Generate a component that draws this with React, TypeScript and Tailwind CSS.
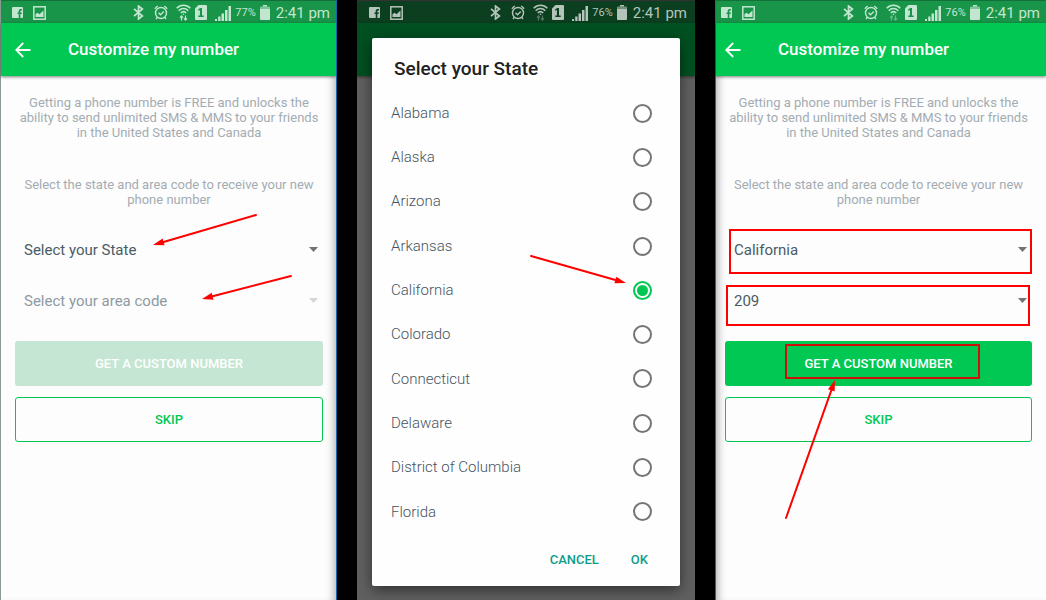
import { useState } from 'react'

const states = [
  'Alabama',
  'Alaska',
  'Arizona',
  'Arkansas',
  'California',
  'Colorado',
  'Connecticut',
  'Delaware',
  'District of Columbia',
  'Florida',
]

function FacebookIcon() {
  return (
    <svg width="11" height="11" viewBox="0 0 11 11" fill="currentColor" aria-hidden="true">
      <path d="M1 0h9a1 1 0 0 1 1 1v9a1 1 0 0 1-1 1H8.4V7h1.3l.2-1.6H8.4v-1c0-.5.2-.8.8-.8h.8V2.100H8.800C7.300 2.100 6.700 3 6.700 4.300v1.100H5.500V7h1.200v4H1a1 1 0 0 1-1-1V1a1 1 0 0 1 1-1z" />
    </svg>
  )
}

function PictureIcon() {
  return (
    <svg width="13" height="14" viewBox="0 0 13 14" aria-hidden="true">
      <rect x=".8" y=".8" width="11.400" height="12.400" fill="none" stroke="currentColor" strokeWidth="1.500" />
      <path d="M2.500 11V8.200l2-1.500 2 1.600 4-3.800V11z" fill="currentColor" />
    </svg>
  )
}

function BluetoothIcon() {
  return (
    <svg width="11" height="15" viewBox="0 0 11 15" fill="none" stroke="currentColor" strokeWidth="1.700" aria-hidden="true">
      <path d="M1 3.800l8.400 7.200-3.900 3V1l3.900 3L1 11.200" />
    </svg>
  )
}

function AlarmIcon() {
  return (
    <svg width="14" height="15" viewBox="0 0 14 15" fill="none" stroke="currentColor" strokeWidth="1.400" aria-hidden="true">
      <circle cx="7" cy="8" r="5.500" />
      <path d="M.8 3.700L3.700 1M13.200 3.700L10.300 1M4.500 7.800l2 1.900 3.300-3.200M3.200 12.400L2 14M10.800 12.400L12 14" />
    </svg>
  )
}

function WifiIcon({ idle = false }: { idle?: boolean }) {
  return (
    <svg width="15" height="17" viewBox="0 0 15 17" fill="none" stroke="currentColor" strokeWidth="1.500" aria-hidden="true">
      <path d="M.7 4.300C4.500.2 10.500.2 14.300 4.300M2.700 6.700c2.800-2.800 6.800-2.800 9.600 0M4.800 8.900c1.600-1.500 3.800-1.500 5.400 0" />
      <circle cx="7.500" cy="10.200" r=".8" fill="currentColor" stroke="none" />
      <path
        d="M5.500 16.500v-4.500M4 13.600l1.500-1.700L7 13.600M9.500 11.500V16M8 14.400l1.500 1.700 1.500-1.700"
        strokeWidth="1.200"
        opacity={idle ? 0.45 : 1}
      />
    </svg>
  )
}

function SimIcon() {
  return (
    <svg width="12" height="15" viewBox="0 0 12 15" aria-hidden="true">
      <path
        d="M3.500 0H11a1 1 0 0 1 1 1v13a1 1 0 0 1-1 1H1a1 1 0 0 1-1-1V3.500zM5.400 3L3.200 4.300v1.500l1.700-.7V10.500H3.300V12h5.400v-1.500H7V3z"
        fill="currentColor"
        fillRule="evenodd"
      />
    </svg>
  )
}

function SignalIcon() {
  return (
    <svg width="16" height="16" viewBox="0 0 16 16" fill="currentColor" aria-hidden="true">
      <path d="M0 14h2v2H0zM3.200 11.500h2.300V16H3.200zM6.500 8.500h2.500V16H6.500zM10 5h2.500v11H10zM13.500 1H16v15h-2.500z" />
    </svg>
  )
}

function BatteryIcon() {
  return (
    <svg width="10" height="15" viewBox="0 0 10 15" fill="currentColor" aria-hidden="true">
      <path d="M3 0h4v1.500H3z" />
      <path d="M1 1.500h8a1 1 0 0 1 1 1V4H0V2.500a1 1 0 0 1 1-1z" opacity=".6" />
      <path d="M0 4h10v10a1 1 0 0 1-1 1H1a1 1 0 0 1-1-1z" />
    </svg>
  )
}

function StatusBar({ battery, idle, className }: { battery: string; idle?: boolean; className: string }) {
  return (
    <div className={`flex h-[23px] items-center border-t pt-px ${className}`}>
      <FacebookIcon />
      <div className="ml-2.5">
        <PictureIcon />
      </div>
      <div className="ml-auto flex items-center">
        <BluetoothIcon />
        <div className="ml-2.5">
          <AlarmIcon />
        </div>
        <div className="ml-2 flex items-center gap-1">
          <WifiIcon idle={idle} />
          <SimIcon />
        </div>
        <div className="ml-2 flex items-center gap-1">
          <SignalIcon />
          <span className="text-[11px] leading-4">{battery}</span>
          <BatteryIcon />
        </div>
        <span className="ml-1.5 text-[15px] leading-5">2:41 pm</span>
      </div>
    </div>
  )
}

function AppBar({ className }: { className: string }) {
  return (
    <header
      className={`flex h-[53px] items-center bg-[#00c853] text-white shadow-[0_1px_3px_rgba(0,0,0,0.5)] ${className}`}
    >
      <button type="button" aria-label="Back">
        <svg width="16" height="16" viewBox="0 0 16 16" fill="none" stroke="currentColor" strokeWidth="1.800" aria-hidden="true">
          <path d="M15.500 8H1.500M8.200 1L1.300 8l6.900 7" />
        </svg>
      </button>
      <h1 className="ml-[37px] pt-px text-[17px] font-medium">Customize my number</h1>
    </header>
  )
}

type DropdownProps = {
  label: string
  options: string[]
  disabled?: boolean
}

function Dropdown({ label, options, disabled }: DropdownProps) {
  return (
    <div className="relative">
      <select
        aria-label={label}
        disabled={disabled}
        className="block h-11 w-full appearance-none bg-transparent pr-6 pl-[9px] text-[15px] text-[#4a5b66] disabled:text-[#8e9aa2] disabled:opacity-100"
      >
        {options.map((option) => (
          <option key={option}>{option}</option>
        ))}
      </select>
      <svg
        className={`pointer-events-none absolute top-[19px] right-[5px] ${disabled ? 'text-[#d5d5d5]' : 'text-[#737373]'}`}
        width="9"
        height="5"
        viewBox="0 0 9 5"
        fill="currentColor"
        aria-hidden="true"
      >
        <path d="M0 0h9L4.500 5z" />
      </svg>
    </div>
  )
}

type Point = [number, number]

// Red pointer, tip at `to`, both points relative to its own box
function Arrow({ from, to, className }: { from: Point; to: Point; className: string }) {
  const length = Math.hypot(to[0] - from[0], to[1] - from[1])
  const ux = (to[0] - from[0]) / length
  const uy = (to[1] - from[1]) / length
  const bx = to[0] - ux * 11
  const by = to[1] - uy * 11
  const head = `${to[0]},${to[1]} ${bx - uy * 3.5},${by + ux * 3.5} ${bx + uy * 3.5},${by - ux * 3.5}`
  return (
    <svg className={`pointer-events-none absolute overflow-visible ${className}`} aria-hidden="true">
      <line x1={from[0]} y1={from[1]} x2={bx} y2={by} stroke="#ff0000" strokeWidth="2" strokeLinecap="round" />
      <polygon points={head} fill="#ff0000" />
    </svg>
  )
}

function Highlight({ className }: { className: string }) {
  return <div className={`pointer-events-none absolute border-2 ${className}`} />
}

function Intro() {
  return (
    <div className="text-center text-[13px] leading-[15px] text-[#a3acb2]">
      <p>
        Getting a phone number is FREE and unlocks the
        <br />
        ability to send unlimited SMS &amp; MMS to your friends
        <br />
        in the United States and Canada
      </p>
      <p className="mt-[37px]">
        Select the state and area code to receive your new
        <br />
        phone number
      </p>
    </div>
  )
}

const buttonBase = 'h-[45px] w-full rounded-[3px] text-[13px] font-medium'

function EmptyForm() {
  return (
    <section className="border-l border-[#8a9a90] bg-[#fdfdfd] shadow-[inset_-8px_0_8px_-6px_rgba(0,0,0,0.3)]">
      <StatusBar battery="77%" className="border-[#14703a] bg-[#189549] pr-[6px] pl-[11px] text-[#c3e6d0]" />
      <AppBar className="pl-[14px]" />
      <div className="pt-[19px] pr-[13px] pl-[14px]">
        <Intro />
        <div className="relative mt-[21px] flex flex-col gap-[7px]">
          <Dropdown label="State" options={['Select your State']} />
          <Dropdown label="Area code" options={['Select your area code']} disabled />
          <Arrow from={[103, 1]} to={[0, 31]} className="top-[-14px] left-[138px] h-8 w-26" />
          <Arrow from={[89, 1]} to={[0, 24]} className="top-[47px] left-[187px] h-6 w-22" />
        </div>
        <div className="mt-[18px] flex flex-col gap-[11px]">
          <button type="button" disabled className={`${buttonBase} bg-[#c4e6d2] text-white`}>
            GET A CUSTOM NUMBER
          </button>
          <button type="button" className={`${buttonBase} border border-[#00c853] text-[#00c853]`}>
            SKIP
          </button>
        </div>
      </div>
    </section>
  )
}

function StateDialog() {
  const [selected, setSelected] = useState('California')
  return (
    <section className="border-x border-x-[#1769aa] bg-black px-5">
      <div className="flex h-full flex-col bg-[#606060]">
        <div className="relative flex flex-1 flex-col px-[15px] pb-[14px]">
          <div className="absolute inset-x-0 top-0">
            <StatusBar battery="76%" idle className="border-[#333333] bg-[#0b3f1f] pr-2 pl-3 text-[#b5c4ba]" />
            <div className="h-[53px] bg-[#005021] shadow-[0_1px_3px_rgba(0,0,0,0.5)]" />
          </div>
          <div
            role="dialog"
            aria-labelledby="dialog-title"
            className="relative mt-[38px] flex flex-1 flex-col rounded-[2px] bg-[#fefefe] shadow-[0_4px_14px_rgba(0,0,0,0.5)]"
          >
            <h2 id="dialog-title" className="h-[53px] pt-[19px] pl-[22px] text-[19px] leading-6 font-medium text-[#212121]">
              Select your State
            </h2>
            <div className="grid flex-1 auto-rows-fr pr-7 pl-[19px]">
              {states.map((state) => (
                <label key={state} className="flex items-center justify-between text-[15px] font-light text-[#45545e]">
                  {state}
                  <input
                    type="radio"
                    name="state"
                    checked={state === selected}
                    onChange={() => setSelected(state)}
                    className="flex size-[19px] appearance-none items-center justify-center rounded-full border-2 border-[#757575] checked:border-[#00c853] checked:before:size-[11px] checked:before:rounded-full checked:before:bg-[#00c853] checked:before:content-['']"
                  />
                </label>
              ))}
            </div>
            <div className="flex h-[52px] items-center justify-end gap-8 pr-8 text-[13px] font-medium text-[#0e9c8a]">
              <button type="button">CANCEL</button>
              <button type="button">OK</button>
            </div>
            <Arrow from={[0, 1]} to={[95, 28]} className="top-[217px] right-[53px] h-7 w-24" />
          </div>
        </div>
      </div>
    </section>
  )
}

function FilledForm() {
  return (
    <section className="bg-[#fdfdfd] shadow-[inset_8px_0_8px_-6px_rgba(0,0,0,0.3)]">
      <StatusBar battery="76%" idle className="border-[#14703a] bg-[#189549] pr-[6px] pl-[5px] text-[#c3e6d0]" />
      <AppBar className="pl-[9px]" />
      <div className="pt-[19px] pr-[14px] pl-[9px]">
        <Intro />
        <div className="relative mt-[21px] flex flex-col gap-[7px]">
          <Dropdown label="State" options={['California']} />
          <Dropdown label="Area code" options={['209']} />
          <Highlight className="top-px right-0 left-1 h-[45px] border-[#ff0000]" />
          <Highlight className="top-[57px] right-[2px] left-px h-[41px] border-[#ff0000]" />
        </div>
        <div className="relative mt-[18px] flex flex-col gap-[11px]">
          <button type="button" className={`${buttonBase} bg-[#00c853] text-white`}>
            GET A CUSTOM NUMBER
          </button>
          <button type="button" className={`${buttonBase} border border-[#00c853] text-[#00c853]`}>
            SKIP
          </button>
          <Highlight className="top-[3px] right-[52px] left-[60px] h-[35px] border-[#d01008]" />
          <Arrow from={[0, 138]} to={[49, 0]} className="top-[39px] left-[61px] h-35 w-12" />
        </div>
      </div>
    </section>
  )
}

export default function App() {
  return (
    <main className="grid min-h-screen grid-cols-[336fr_380fr_330fr] font-[Roboto,sans-serif]">
      <EmptyForm />
      <StateDialog />
      <FilledForm />
    </main>
  )
}
